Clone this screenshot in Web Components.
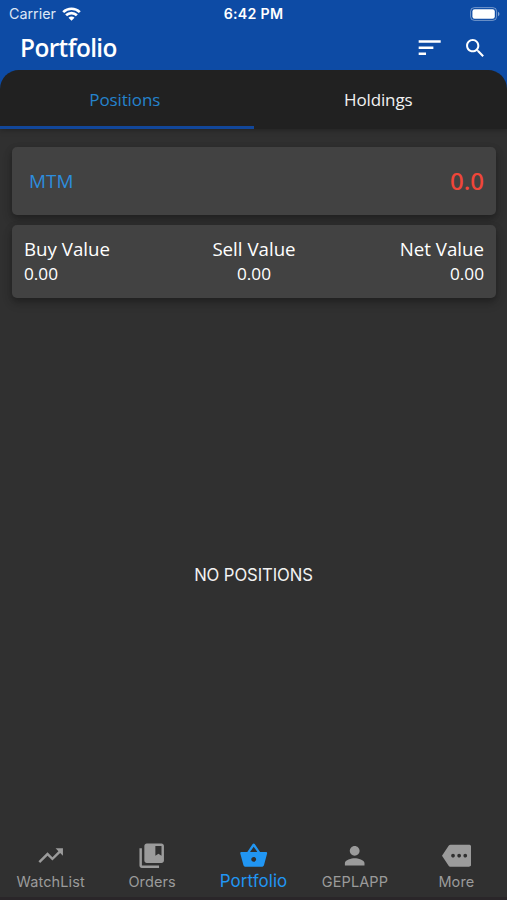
<!DOCTYPE html>
<html lang="en">
<head>
<meta charset="utf-8">
<meta name="viewport" content="width=device-width, initial-scale=1">
<title>Portfolio</title>
<style>
    html, body {
        height: 100%;
        margin: 0;
    }

    body {
        background: #303030;
        overflow: hidden;
    }
</style>
</head>
<body>
<portfolio-app></portfolio-app>

<script>
const ICONS = {
    sort: '<path d="M3 18h6v-2H3v2zM3 6v2h18V6H3zm0 7h12v-2H3v2z"/>',
    search: '<path d="M15.5 14h-.79l-.28-.27C15.41 12.59 16 11.11 16 9.5 16 5.91 13.09 3 9.5 3S3 5.91 3 9.5 5.91 16 9.5 16c1.61 0 3.09-.59 4.23-1.57l.27.28v.79l5 4.99L20.49 19l-4.99-5zm-6 0C7.01 14 5 11.99 5 9.5S7.01 5 9.5 5 14 7.01 14 9.5 11.99 14 9.5 14z"/>',
    trending: '<path d="M16 6l2.29 2.29-4.88 4.88-4-4L2 16.59 3.41 18l6-6 4 4 6.3-6.29L22 12V6z"/>',
    bookmarks: '<path d="M4 6H2v14c0 1.1.9 2 2 2h14v-2H4V6zm16-4H8c-1.1 0-2 .9-2 2v12c0 1.1.9 2 2 2h12c1.1 0 2-.9 2-2V4c0-1.1-.9-2-2-2zm0 10l-2.5-1.5L15 12V4h5v8z"/>',
    basket: '<path d="M17.21 9l-4.38-6.56c-.19-.28-.51-.42-.83-.42-.32 0-.64.14-.83.43L6.79 9H2c-.55 0-1 .45-1 1 0 .09.01.18.04.27l2.54 9.27c.23.84 1 1.46 1.92 1.46h13c.92 0 1.69-.62 1.93-1.46l2.54-9.27L23 10c0-.55-.45-1-1-1h-4.79zM9 9l3-4.4L15 9H9zm3 8c-1.1 0-2-.9-2-2s.9-2 2-2 2 .9 2 2-.9 2-2 2z"/>',
    person: '<path d="M12 12c2.21 0 4-1.79 4-4s-1.79-4-4-4-4 1.79-4 4 1.79 4 4 4zm0 2c-2.67 0-8 1.34-8 4v2h16v-2c0-2.66-5.33-4-8-4z"/>',
    more: '<path d="M22 3H7c-.69 0-1.23.35-1.59.88L0 12l5.41 8.11c.36.53.97.89 1.66.89H22c1.1 0 2-.9 2-2V5c0-1.1-.9-2-2-2zM9 13.5c-.83 0-1.5-.67-1.5-1.5s.67-1.5 1.5-1.5 1.5.67 1.5 1.5-.67 1.5-1.5 1.5zm5 0c-.83 0-1.5-.67-1.5-1.5s.67-1.5 1.5-1.5 1.5.67 1.5 1.5-.67 1.5-1.5 1.5zm5 0c-.83 0-1.5-.67-1.5-1.5s.67-1.5 1.5-1.5 1.5.67 1.5 1.5-.67 1.5-1.5 1.5z"/>'
};

class BaseElement extends HTMLElement {
    constructor() {
        super();
        this.attachShadow({ mode: 'open' });
    }

    connectedCallback() {
        this.shadowRoot.innerHTML = `<style>${this.constructor.styles}</style>${this.render()}`;
    }
}

class MaterialIcon extends BaseElement {
    static get styles() {
        return `
        :host {
            display: block;
            width: var(--size, 29.4px);
            height: var(--size, 29.4px);
        }

        svg {
            display: block;
            width: 100%;
            height: 100%;
            fill: currentColor;
        }
        `;
    }

    render() {
        return `<svg viewBox="0 0 24 24">${ICONS[this.getAttribute('name')]}</svg>`;
    }
}

class StatusBar extends BaseElement {
    static get styles() {
        return `
        :host {
            display: grid;
            grid-template-columns: 1fr auto 1fr;
            align-items: center;
            height: 26px;
            padding: 1px 7px 0 9px;
            box-sizing: border-box;
            font: 14.3px/20px Inter, sans-serif;
        }

        .carrier {
            display: flex;
            align-items: center;
            gap: 6px;
            color: #dce6f5;
        }

        .time {
            padding-right: 2px;
            font-weight: 600;
            font-size: 14.2px;
            letter-spacing: .25px;
        }

        .battery {
            justify-self: end;
        }

        svg {
            display: block;
        }
        `;
    }

    render() {
        return `
        <div class="carrier">
            <span>Carrier</span>
            <svg width="19" height="14" viewBox="0 0 19 14" fill="none" stroke="#fff" stroke-width="2.7">
                <path d="M1.2 5.1a12 12 0 0 1 16.6 0M4.1 8.3a7.8 7.8 0 0 1 10.8 0"/>
                <path d="M9.5 13.7L6.5 10.7a4.2 4.2 0 0 1 6 0z" fill="#fff" stroke="none"/>
            </svg>
        </div>
        <span class="time">6:42 PM</span>
        <svg class="battery" width="30" height="14" viewBox="0 0 30 14">
            <rect x=".6" y=".6" width="26" height="12.8" rx="3.8" fill="none" stroke="#fff" stroke-opacity=".42"/>
            <rect x="2.4" y="2.3" width="22.4" height="9.4" rx="2.2" fill="#fff"/>
            <path d="M28 4.8c2 .8 2 3.6 0 4.4z" fill="#fff" fill-opacity=".5"/>
        </svg>`;
    }
}

class AppBar extends BaseElement {
    static get styles() {
        return `
        :host {
            display: flex;
            align-items: center;
            height: 44px;
            padding: 0 20px;
            box-sizing: border-box;
        }

        h1 {
            flex: 1;
            margin: 0;
            font: 600 24.4px/30px "Open Sans", sans-serif;
            letter-spacing: -.6px;
        }

        .actions {
            display: flex;
            align-items: center;
            gap: 18px;
        }
        `;
    }

    render() {
        return `<h1><slot></slot></h1><div class="actions"><slot name="action"></slot></div>`;
    }
}

class TabBar extends BaseElement {
    static get styles() {
        return `
        :host {
            display: flex;
            height: 59px;
            background: #212121;
            border-radius: 19px 19px 0 0;
            overflow: hidden;
        }
        `;
    }

    render() {
        return `<slot></slot>`;
    }
}

class TabItem extends BaseElement {
    static get styles() {
        return `
        :host {
            flex: 1;
            display: flex;
            align-items: center;
            justify-content: center;
            box-sizing: border-box;
            border-bottom: 3px solid transparent;
            padding: 3px 4px 0 0;
            font: 17px/24px "Open Sans", sans-serif;
            letter-spacing: -.12px;
            color: #f2f2f2;
        }

        :host([active]) {
            color: #2583cd;
            border-bottom-color: #12479a;
        }
        `;
    }

    render() {
        return `<slot></slot>`;
    }
}

class InfoCard extends BaseElement {
    static get styles() {
        return `
        :host {
            display: flex;
            justify-content: space-between;
            align-items: center;
            box-sizing: border-box;
            background: #424242;
            border-radius: 5px;
            box-shadow: 0 3px 7px rgba(0, 0, 0, .28), 0 5px 12px rgba(0, 0, 0, .12);
        }
        `;
    }

    render() {
        return `<slot></slot>`;
    }
}

class ValueCell extends BaseElement {
    static get styles() {
        return `
        :host {
            display: block;
            flex: 1;
            text-align: var(--align, left);
            font-family: "Open Sans", sans-serif;
            color: #fff;
        }

        .label {
            font-size: 18.7px;
            line-height: 25px;
        }

        .value {
            font-size: 17.2px;
            line-height: 25px;
        }
        `;
    }

    render() {
        return `
        <div class="label">${this.getAttribute('label')}</div>
        <div class="value"><slot></slot></div>`;
    }
}

class NavItem extends BaseElement {
    static get styles() {
        return `
        :host {
            flex: 1;
            display: flex;
            flex-direction: column;
            align-items: center;
            color: #9b9b9b;
            font: 14.5px/20px Inter, sans-serif;
            letter-spacing: .1px;
        }

        .label {
            margin-top: 2px;
        }

        :host([active]) {
            color: #2196f3;
            font-size: 16.9px;
        }

        :host([active]) .label {
            margin-top: 1px;
        }
        `;
    }

    render() {
        return `
        <material-icon name="${this.getAttribute('icon')}"></material-icon>
        <span class="label"><slot></slot></span>`;
    }
}

class PortfolioApp extends BaseElement {
    static get styles() {
        return `
        :host {
            display: flex;
            flex-direction: column;
            height: 100vh;
            color: #fff;
            background: #303030;
        }

        header {
            background: #0d4ba5;
            box-shadow: 0 1px 6px rgba(0, 0, 0, .3);
        }

        .cards {
            display: flex;
            flex-direction: column;
            gap: 10px;
            padding: 17.5px 11px 0 12px;
        }

        .mtm {
            height: 68px;
            padding: 0 12px 0 17px;
            font: 18.9px/26px "Open Sans", sans-serif;
            color: #2d8ddd;
        }

        .mtm .amount {
            font-family: "Noto Sans", sans-serif;
            font-size: 24px;
            font-weight: 500;
            color: #f04639;
        }

        .values {
            height: 73px;
            padding: 0 12px;
        }

        .empty {
            flex: 1;
            display: flex;
            align-items: center;
            justify-content: center;
            padding-top: 11px;
            font: 16.7px/24px Inter, sans-serif;
            letter-spacing: -.1px;
            color: #f2f2f2;
        }

        nav {
            display: flex;
            height: 56.5px;
            border-bottom: 3px solid #2a2629;
        }
        `;
    }

    render() {
        return `
        <header>
            <status-bar></status-bar>
            <app-bar>
                Portfolio
                <material-icon slot="action" name="sort"></material-icon>
                <material-icon slot="action" name="search" style="--size: 24.5px"></material-icon>
            </app-bar>
            <tab-bar>
                <tab-item active>Positions</tab-item>
                <tab-item>Holdings</tab-item>
            </tab-bar>
        </header>
        <section class="cards">
            <info-card class="mtm"><span>MTM</span><span class="amount">0.0</span></info-card>
            <info-card class="values">
                <value-cell label="Buy Value">0.00</value-cell>
                <value-cell label="Sell Value" style="--align: center">0.00</value-cell>
                <value-cell label="Net Value" style="--align: right">0.00</value-cell>
            </info-card>
        </section>
        <div class="empty">NO POSITIONS</div>
        <nav>
            <nav-item icon="trending">WatchList</nav-item>
            <nav-item icon="bookmarks">Orders</nav-item>
            <nav-item icon="basket" active>Portfolio</nav-item>
            <nav-item icon="person">GEPLAPP</nav-item>
            <nav-item icon="more">More</nav-item>
        </nav>`;
    }
}

customElements.define('material-icon', MaterialIcon);
customElements.define('status-bar', StatusBar);
customElements.define('app-bar', AppBar);
customElements.define('tab-bar', TabBar);
customElements.define('tab-item', TabItem);
customElements.define('info-card', InfoCard);
customElements.define('value-cell', ValueCell);
customElements.define('nav-item', NavItem);
customElements.define('portfolio-app', PortfolioApp);
</script>
</body>
</html>
